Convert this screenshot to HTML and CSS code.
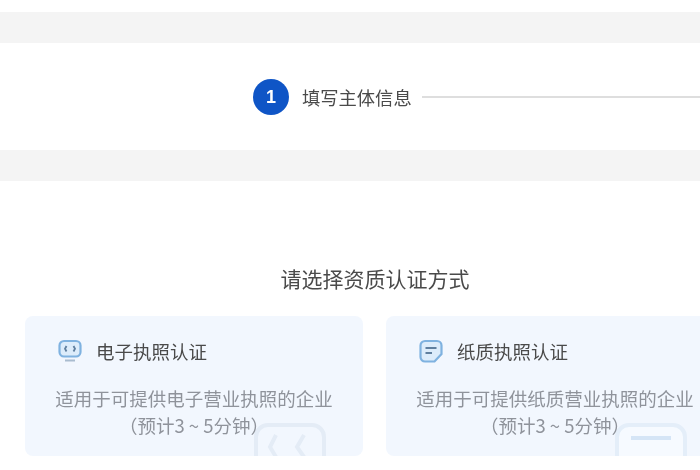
FILE: index.html
```html
<!DOCTYPE html>
<html lang="zh">
<head>
<meta charset="utf-8">
<title>资质认证</title>
<link rel="stylesheet" href="styles.css">
</head>
<body>
<div class="page">
  <div class="band"></div>
  <section class="steps">
    <span class="step-num">1</span>
    <span class="step-label">填写主体信息</span>
    <span class="step-line"></span>
  </section>
  <div class="band"></div>
  <main class="choose">
    <h1 class="choose-title">请选择资质认证方式</h1>
    <div class="cards">
      <article class="card">
        <div class="card-head">
          <svg class="icon" viewBox="0 0 24 24" fill="none">
            <rect x="1.500" y="2" width="21" height="15.500" rx="4.500" fill="#dcecfb" stroke="#7fb2e0" stroke-width="2.200"/>
            <path d="M8.500 7 7 9.750l1.500 2.750M15.500 7 17 9.750l-1.500 2.750" stroke="#5f7f9f" stroke-width="1.800"/>
            <path d="M7 21.500h10" stroke="#a9bccf" stroke-width="2.200"/>
          </svg>
          <h2 class="card-title">电子执照认证</h2>
        </div>
        <p class="card-desc">适用于可提供电子营业执照的企业<br>（预计3 ~ 5分钟）</p>
        <svg class="watermark" viewBox="0 0 72 33" fill="none">
          <rect x="2" y="2" width="68" height="60" rx="12" stroke="#e4ecf6" stroke-width="4"/>
          <path d="M22 12 16 24l6 10M50 12l-7 12 7 10" stroke="#e4ecf6" stroke-width="4"/>
        </svg>
      </article>
      <article class="card">
        <div class="card-head">
          <svg class="icon" viewBox="0 0 24 24" fill="none">
            <path d="M6 2h12a4.500 4.500 0 0 1 4.500 4.500V15l-7 7.500H6A4.500 4.500 0 0 1 1.500 18V6.500A4.500 4.500 0 0 1 6 2Z" fill="#dcecfb" stroke="#7fb2e0" stroke-width="2.200"/>
            <path d="M6.500 9h11M6.500 14H13" stroke="#5f7f9f" stroke-width="1.900"/>
          </svg>
          <h2 class="card-title">纸质执照认证</h2>
        </div>
        <p class="card-desc">适用于可提供纸质营业执照的企业<br>（预计3 ~ 5分钟）</p>
        <svg class="watermark" viewBox="0 0 72 33" fill="none">
          <rect x="2" y="2" width="68" height="60" rx="12" fill="#f6faff" stroke="#e4eef9" stroke-width="4"/>
          <path d="M16 15h40" stroke="#d5e5f6" stroke-width="4"/>
        </svg>
      </article>
    </div>
  </main>
</div>
</body>
</html>
```
FILE: styles.css
```css
* { box-sizing: border-box; }
html, body { margin: 0; height: 100%; overflow: hidden; background: #fff; }
body { font-family: "Noto Sans CJK SC", "Liberation Sans", sans-serif; }
.page { width: 700px; height: 470px; padding-top: 12px; overflow: hidden; filter: blur(0.7px); }
.band { height: 31px; background: #f4f4f4; }
.steps { height: 107px; display: flex; align-items: center; padding-left: 253px; }
.step-num { width: 36px; height: 36px; flex: none; border-radius: 50%; background: #0f55c6; color: #fff; font: 700 18px/36px "Liberation Sans", sans-serif; text-align: center; }
.step-label { margin-left: 13px; font-size: 18.300px; line-height: 26px; color: #4a4a4a; white-space: nowrap; }
.step-line { flex: 1; height: 2px; margin-left: 10px; background: #dedede; }
.choose { padding-top: 82px; }
.choose-title { margin: 0 0 23px; padding-left: 50px; text-align: center; font-size: 21px; line-height: 30px; font-weight: 400; color: #4a4a4a; }
.cards { display: flex; gap: 23px; padding-left: 25px; width: 760px; }
.card { position: relative; flex: none; width: 338px; height: 140px; padding: 20px 0 0; background: #f2f7fe; border-radius: 8px; overflow: hidden; text-align: center; }
.card-head { display: flex; align-items: center; padding-left: 33px; height: 30px; }
.icon { width: 24px; height: 24px; flex: none; }
.card-title { margin: 0 0 0 14px; font-size: 18.500px; line-height: 30px; font-weight: 400; color: #4a4a4a; }
.card-desc { position: relative; z-index: 1; margin: 19px 0 0; font-size: 18.500px; line-height: 27px; color: #8f939b; white-space: nowrap; }
.watermark { position: absolute; left: 229px; bottom: 0; width: 72px; height: 33px; }
```
